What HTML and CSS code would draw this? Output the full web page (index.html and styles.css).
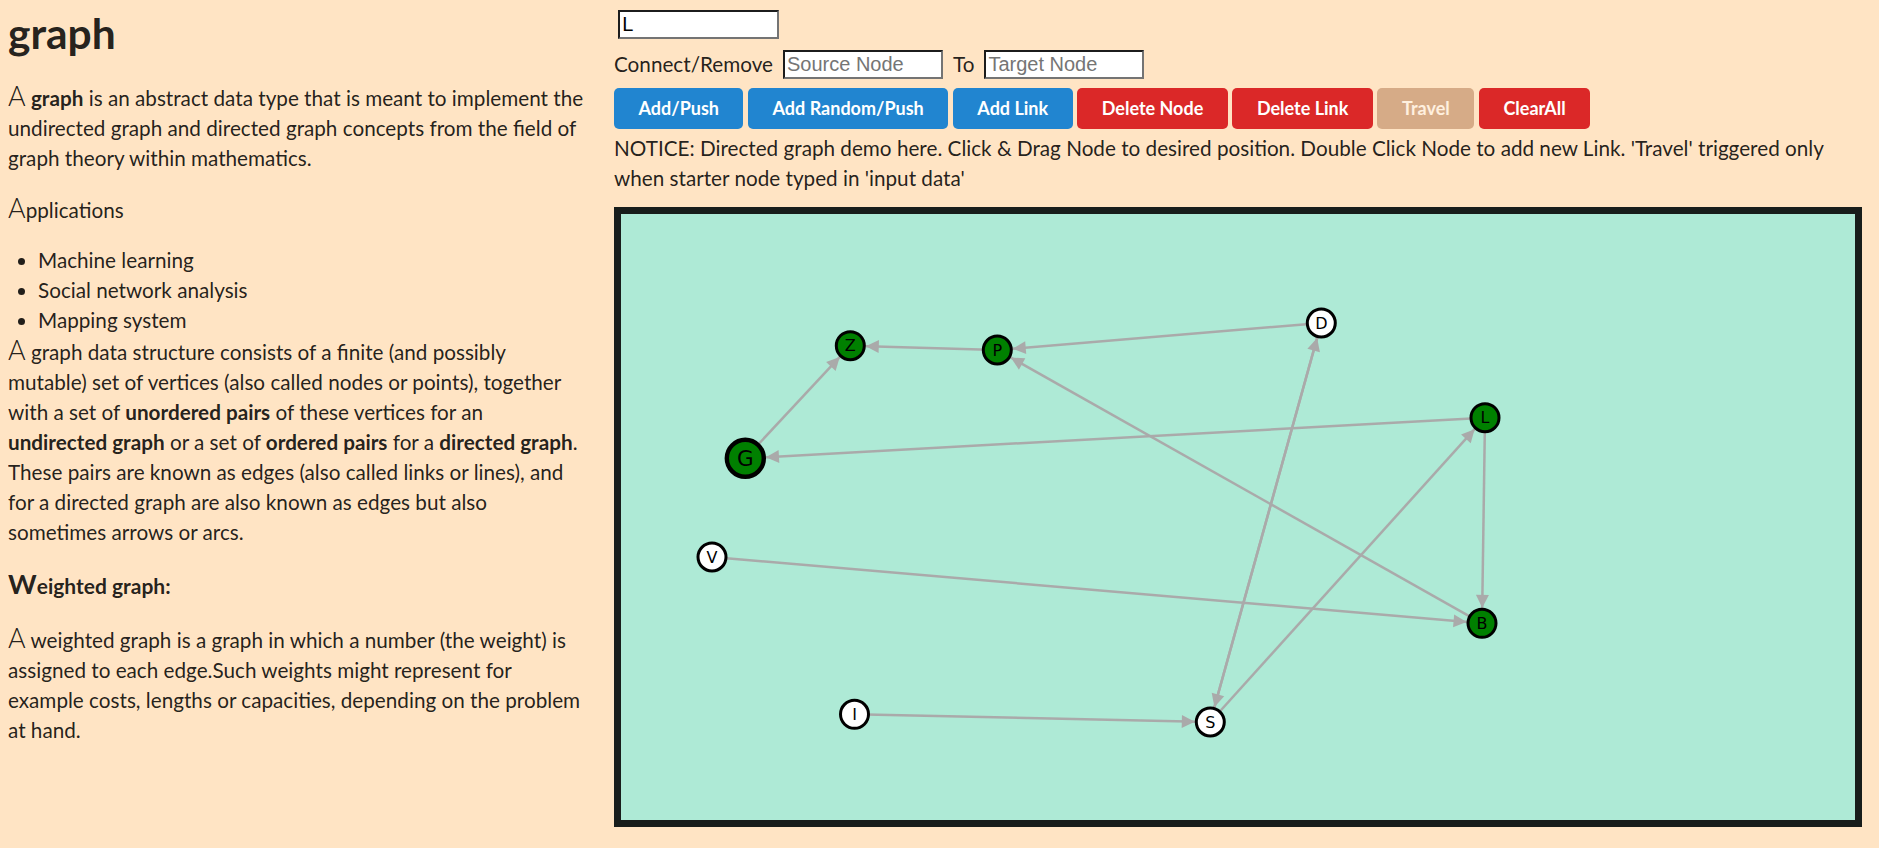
FILE: index.html
```html
<!DOCTYPE html>
<html>
<head>
<meta charset="utf-8">
<title>graph</title>
<link rel="stylesheet" href="styles.css">
</head>
<body>
<div class="page">
  <div class="info">
    <h1 class="title">graph</h1>
    <p class="lead">A <b>graph</b> is an abstract data type that is meant to implement the undirected graph and directed graph concepts from the field of graph theory within mathematics.</p>
    <p class="lead">Applications</p>
    <ul class="apps">
      <li>Machine learning</li>
      <li>Social network analysis</li>
      <li>Mapping system</li>
    </ul>
    <div class="lead">A graph data structure consists of a finite (and possibly mutable) set of vertices (also called nodes or points), together with a set of <b>unordered pairs</b> of these vertices for an <b>undirected graph</b> or a set of <b>ordered pairs</b> for a <b>directed graph</b>. These pairs are known as edges (also called links or lines), and for a directed graph are also known as edges but also sometimes arrows or arcs.</div>
    <p class="lead subhead">Weighted graph:</p>
    <p class="lead">A weighted graph is a graph in which a number (the weight) is assigned to each edge.Such weights might represent for example costs, lengths or capacities, depending on the problem at hand.</p>
  </div>
  <div class="controls">
    <div class="row1"><input class="field data" type="text" value="L"></div>
    <div class="row2">
      <span>Connect/Remove</span>
      <input class="field" type="text" placeholder="Source Node">
      <span>To</span>
      <input class="field" type="text" placeholder="Target Node">
    </div>
    <div class="buttons">
      <button class="btn blue">Add/Push</button>
      <button class="btn blue">Add Random/Push</button>
      <button class="btn blue">Add Link</button>
      <button class="btn red">Delete Node</button>
      <button class="btn red">Delete Link</button>
      <button class="btn brown" disabled>Travel</button>
      <button class="btn red">ClearAll</button>
    </div>
    <p class="notice">NOTICE: Directed graph demo here. Click &amp; Drag Node to desired position. Double Click Node to add new Link. 'Travel' triggered only when starter node typed in 'input data'</p>
    <div class="canvas">
      <svg class="graph" width="1234" height="606" viewBox="0 0 1234 606">
        <defs>
          <marker id="arrow" viewBox="0 -7 13 14" refX="28.5" refY="0" markerWidth="13" markerHeight="14" markerUnits="userSpaceOnUse" orient="auto" overflow="visible">
            <path d="M0,-6.5L13,0L0,6.5Z" fill="#aaaaaa"/>
          </marker>
          <marker id="arrowbig" viewBox="0 -7 13 14" refX="33.7" refY="0" markerWidth="13" markerHeight="14" markerUnits="userSpaceOnUse" orient="auto" overflow="visible">
            <path d="M0,-6.5L13,0L0,6.5Z" fill="#aaaaaa"/>
          </marker>
        </defs>
        <g class="links">
          <line x1="376.3" y1="136" x2="229.3" y2="131.7" marker-end="url(#arrow)"/>
          <line x1="124.3" y1="244.3" x2="229.3" y2="131.7" marker-end="url(#arrow)"/>
          <line x1="700.3" y1="109" x2="376.3" y2="136" marker-end="url(#arrow)"/>
          <line x1="861" y1="409.3" x2="376.3" y2="136" marker-end="url(#arrow)"/>
          <line x1="864" y1="203.7" x2="124.3" y2="244.3" marker-end="url(#arrowbig)"/>
          <line x1="91" y1="343" x2="861" y2="409.3" marker-end="url(#arrow)"/>
          <line x1="864" y1="203.7" x2="861" y2="409.3" marker-end="url(#arrow)"/>
          <line x1="700.3" y1="109" x2="589.3" y2="508" marker-end="url(#arrow)"/>
          <line x1="589.3" y1="508" x2="700.3" y2="109" marker-end="url(#arrow)"/>
          <line x1="589.3" y1="508" x2="864" y2="203.7" marker-end="url(#arrow)"/>
          <line x1="233.5" y1="500.3" x2="589.3" y2="508" marker-end="url(#arrow)"/>
        </g>
        <g class="nodes">
          <circle class="node on" cx="229.3" cy="131.7" r="14"/>
          <text class="label" x="229.3" y="131.7">Z</text>
          <circle class="node on" cx="376.3" cy="136" r="14"/>
          <text class="label" x="376.3" y="136">P</text>
          <circle class="node on big" cx="124.3" cy="244.3" r="18.5"/>
          <text class="label biglabel" x="124.3" y="244.3">G</text>
          <circle class="node" cx="700.3" cy="109" r="14"/>
          <text class="label" x="700.3" y="109">D</text>
          <circle class="node on" cx="864" cy="203.7" r="14"/>
          <text class="label" x="864" y="203.7">L</text>
          <circle class="node on" cx="861" cy="409.3" r="14"/>
          <text class="label" x="861" y="409.3">B</text>
          <circle class="node" cx="91" cy="343" r="14"/>
          <text class="label" x="91" y="343">V</text>
          <circle class="node" cx="233.5" cy="500.3" r="14"/>
          <text class="label" x="233.5" y="500.3">I</text>
          <circle class="node" cx="589.3" cy="508" r="14"/>
          <text class="label" x="589.3" y="508">S</text>
        </g>
      </svg>
    </div>
  </div>
</div>
</body>
</html>
```
FILE: styles.css
```css
html, body {
  background: #ffe4c4;
}
body {
  margin: 8px;
  font-family: Lato, "Open Sans", sans-serif;
  font-size: 20.7px;
  line-height: 30px;
  color: rgba(0, 0, 0, 0.87);
}
.page {
  display: flex;
  align-items: flex-start;
}
.info {
  flex: none;
  width: 578px;
  padding-right: 28px;
}
.title {
  font-size: 42.5px;
  line-height: 45px;
  font-weight: 700;
  margin: 2px 0 26px;
}
.lead {
  margin: 0 0 20px;
}
.lead::first-letter {
  font-size: 1.3em;
  font-weight: 300;
}
.apps {
  margin: 0;
  padding-left: 30px;
}
.subhead {
  font-size: 21px;
  font-weight: 700;
  margin-top: 22px;
  margin-bottom: 22px;
}
.subhead::first-letter {
  font-weight: 700;
}
.controls {
  flex: 1;
  min-width: 0;
}
.row1 {
  padding-top: 2px;
}
.field {
  box-sizing: border-box;
  width: 160px;
  height: 29.4px;
  margin: 0;
  padding: 1px 2px;
  border-width: 2px;
  border-style: solid;
  border-color: #1c1c1c #747474 #747474 #1c1c1c;
  background: #fff;
  font-family: "Liberation Sans", Arial, sans-serif;
  font-size: 20px;
  color: #000;
  outline: none;
}
.field::placeholder {
  color: #757575;
}
.data {
  display: block;
  margin-left: 4.3px;
  width: 160.7px;
}
.row2 {
  display: flex;
  align-items: center;
  gap: 10px;
  height: 30px;
  margin-top: 10px;
}
.buttons {
  display: flex;
  gap: 4.6px;
  margin-top: 8.3px;
}
.btn {
  height: 41.4px;
  padding: 0 24.5px;
  border: none;
  border-radius: 5px;
  font-family: Lato, sans-serif;
  font-weight: 700;
  font-size: 18px;
  line-height: 18px;
  color: #fff;
  cursor: pointer;
}
.blue {
  background: #2185d0;
}
.red {
  background: #db2828;
}
.brown {
  background: #a5673f;
  opacity: 0.45;
  cursor: default;
}
.notice {
  margin: 3.6px 0 0;
}
.canvas {
  width: 1234px;
  height: 606px;
  margin-top: 14.7px;
  border: 7px solid #181d1b;
  background: #aeead6;
}
.graph {
  display: block;
}
.links line {
  stroke: #aaaaaa;
  stroke-width: 2.5;
}
.node {
  fill: #ffffff;
  stroke: #000000;
  stroke-width: 3;
}
.node.on {
  fill: #008000;
}
.node.big {
  stroke-width: 4.4;
}
.label {
  font-family: "DejaVu Sans", Verdana, sans-serif;
  font-size: 16px;
  fill: #000;
  text-anchor: middle;
  dominant-baseline: central;
}
.biglabel {
  font-size: 21.5px;
}
```
